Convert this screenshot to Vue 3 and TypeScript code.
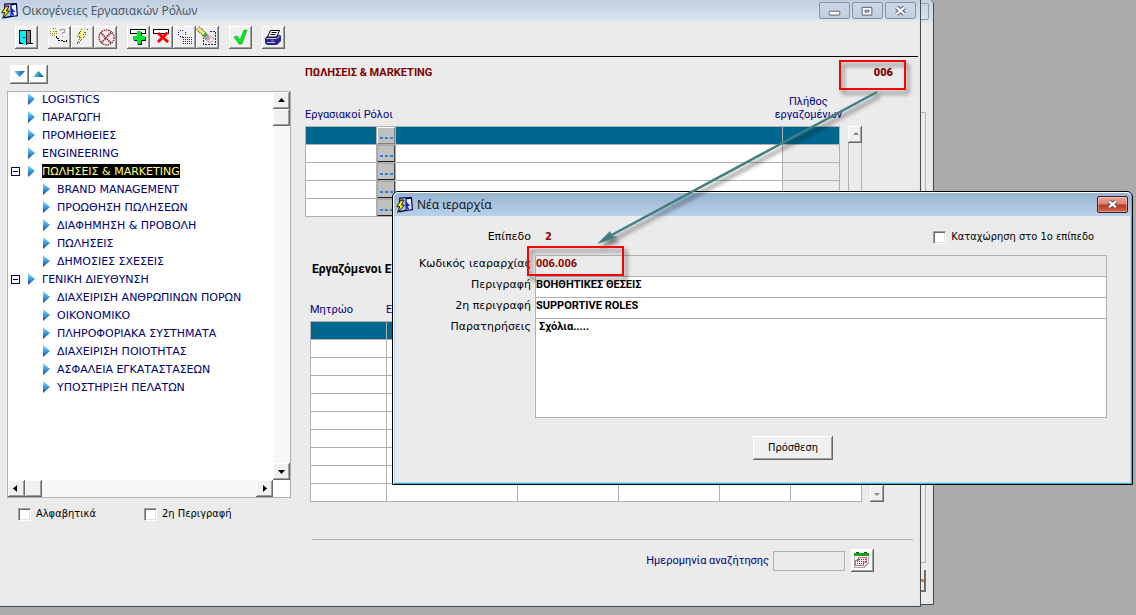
<script setup lang="ts">
import { ref } from 'vue'

interface TreeNode {
  label: string
  level: number
  open?: boolean
}

const nodes: TreeNode[] = [
  { label: 'LOGISTICS', level: 1 },
  { label: 'ΠΑΡΑΓΩΓΗ', level: 1 },
  { label: 'ΠΡΟΜΗΘΕΙΕΣ', level: 1 },
  { label: 'ENGINEERING', level: 1 },
  { label: 'ΠΩΛΗΣΕΙΣ & MARKETING', level: 1, open: true },
  { label: 'BRAND MANAGEMENT', level: 2 },
  { label: 'ΠΡΟΩΘΗΣΗ ΠΩΛΗΣΕΩΝ', level: 2 },
  { label: 'ΔΙΑΦΗΜΗΣΗ & ΠΡΟΒΟΛΗ', level: 2 },
  { label: 'ΠΩΛΗΣΕΙΣ', level: 2 },
  { label: 'ΔΗΜΟΣΙΕΣ ΣΧΕΣΕΙΣ', level: 2 },
  { label: 'ΓΕΝΙΚΗ ΔΙΕΥΘΥΝΣΗ', level: 1, open: true },
  { label: 'ΔΙΑΧΕΙΡΙΣΗ ΑΝΘΡΩΠΙΝΩΝ ΠΟΡΩΝ', level: 2 },
  { label: 'ΟΙΚΟΝΟΜΙΚΟ', level: 2 },
  { label: 'ΠΛΗΡΟΦΟΡΙΑΚΑ ΣΥΣΤΗΜΑΤΑ', level: 2 },
  { label: 'ΔΙΑΧΕΙΡΙΣΗ ΠΟΙΟΤΗΤΑΣ', level: 2 },
  { label: 'ΑΣΦΑΛΕΙΑ ΕΓΚΑΤΑΣΤΑΣΕΩΝ', level: 2 },
  { label: 'ΥΠΟΣΤΗΡΙΞΗ ΠΕΛΑΤΩΝ', level: 2 },
]

const selected = ref('ΠΩΛΗΣΕΙΣ & MARKETING')
const alphabetical = ref(false)
const secondDescription = ref(false)
const firstLevel = ref(false)
const code = ref('006.006')
const description = ref('ΒΟΗΘΗΤΙΚΕΣ ΘΕΣΕΙΣ')
const description2 = ref('SUPPORTIVE ROLES')
const notes = ref('Σχόλια.....')
const searchDate = ref('')
</script>

<template>
  <div class="desktop">
    <div class="window back-window">
      <div class="back-title"><span class="back-close"></span></div>
      <div class="back-body">
        <div class="back-panel"></div>
        <div class="back-button"><i></i></div>
      </div>
    </div>

    <main class="window main-window">
      <header class="titlebar">
        <svg class="app-icon" viewBox="0 0 16 16">
          <path d="M3 1.500L15 1l1 12.500-6 .5-7 1.500z" fill="#000040" />
          <path d="M4 2.500l5-.5v11l-5 1z" fill="#a8c4ff" />
          <path d="M10 3l4-.5.8 10-4.800.7z" fill="#eaf0ff" />
          <path d="M9 4.500l4.500 5H11l1.500 3-1.500.5-1.500-3z" fill="#1020f0" />
          <path d="M5 3h2v2H5z" fill="#e04070" />
          <path d="M4.500 4L.8 10h2.700L1.500 15.500 8 8.500H5L7.500 4z" fill="#fff000" stroke="#000" stroke-width=".8" />
        </svg>
        <h1>Οικογένειες Εργασιακών Ρόλων</h1>
        <div class="controls">
          <button type="button" aria-label="Ελαχιστοποίηση">
            <svg viewBox="0 0 30 16"><rect x="9.500" y="8.500" width="11" height="4" rx="1" fill="#fff" stroke="#565b68" /></svg>
          </button>
          <button type="button" aria-label="Μεγιστοποίηση">
            <svg viewBox="0 0 30 16"><path d="M9.500 4.500h10v8h-10z" fill="#fff" stroke="#565b68" /><path d="M12.500 7.500h4v2h-4z" fill="#cad8e6" stroke="#565b68" /></svg>
          </button>
          <button type="button" aria-label="Κλείσιμο">
            <svg viewBox="0 0 30 16"><path d="M11 4.500l8 7M19 4.500l-8 7" stroke="#565b68" stroke-width="4.500" /><path d="M11 4.500l8 7M19 4.500l-8 7" stroke="#fff" stroke-width="2.400" /></svg>
          </button>
        </div>
      </header>

      <div class="toolbar">
        <div class="group">
          <button type="button" class="tool" aria-label="Έξοδος">
            <svg viewBox="0 0 23 23" shape-rendering="crispEdges">
              <path d="M4 4h12v14H4z" fill="#000" /><path d="M12 5h3v12h-3z" fill="#808080" />
              <path d="M5 5h6v13l-2 1v-1l-4-2z" fill="#00f0f8" /><path d="M11.500 5v14" stroke="#000" /><path d="M8 11.500h2" stroke="#000" />
              <path d="M15 17.500h3" stroke="#000" />
            </svg>
          </button>
        </div>
        <div class="group">
          <button type="button" class="tool" aria-label="Αναζήτηση">
            <svg viewBox="0 0 23 23" shape-rendering="crispEdges">
              <path d="M3 3h5v6H3z" fill="#fbf8b8" />
              <path d="M4.500 2.500h3M2.500 4.500v4M4 9.500h4M8.500 4.500v4M5 5.500h3M4 7.500h3" fill="none" stroke="#8c8430" stroke-dasharray="1 1" />
              <path d="M8.500 10v2.500h2v2h4M15 15.500h3v-2" fill="none" stroke="#000" stroke-dasharray="2 1" />
              <path d="M12.500 5V3.500h4V6l-2 1v1M14 10.500h1" fill="none" stroke="#9c9cac" />
            </svg>
          </button>
          <button type="button" class="tool" aria-label="Εκτέλεση">
            <svg viewBox="0 0 23 23" shape-rendering="crispEdges">
              <path d="M10 3h5l-4 6h3L7 17l2-6H6z" fill="#f8f28c" />
              <path d="M10.500 3L6.500 10.500h3l-4 8M16.500 3L12.500 8.500h3L6 18.500" fill="none" stroke="#66602c" stroke-dasharray="1 1" />
            </svg>
          </button>
          <button type="button" class="tool" aria-label="Ακύρωση">
            <svg viewBox="0 0 23 23">
              <circle cx="12.500" cy="11.500" r="7.500" fill="none" stroke="#8b2530" stroke-width="1.300" stroke-dasharray="1.500 .8" />
              <path d="M7 7l10 10M17 6.500L7.500 16.500" fill="none" stroke="#8b2530" stroke-width="2" stroke-dasharray="1.300 .8" />
            </svg>
          </button>
        </div>
        <div class="group">
          <button type="button" class="tool" aria-label="Προσθήκη">
            <svg viewBox="0 0 23 23" shape-rendering="crispEdges">
              <path d="M3.500 3.500h15v4h-15z" fill="#fff" stroke="#000" />
              <path d="M10 6h5v5h4v4h-4v4h-4v-4H7v-4h3z" fill="#000060" />
              <path d="M10 5h4v5h4v4h-4v4h-4v-4H6v-4h4z" fill="#00e828" />
            </svg>
          </button>
          <button type="button" class="tool" aria-label="Διαγραφή">
            <svg viewBox="0 0 23 23">
              <path d="M3.500 3.500h15v4h-15z" fill="#fff" stroke="#000" shape-rendering="crispEdges" />
              <path d="M8 7l10 9M17.500 6.500L8 16" stroke="#f80000" stroke-width="3" />
            </svg>
          </button>
          <button type="button" class="tool" aria-label="Εύρεση">
            <svg viewBox="0 0 23 23" shape-rendering="crispEdges">
              <path d="M7 4.500h4M5.500 6v4M12.500 6v4M7 10.500h4" fill="none" stroke="#20208c" stroke-dasharray="1 1" />
              <path d="M9 11.500h2" stroke="#d02020" />
              <path d="M10.500 11v7M12.500 11v7M14.500 11v7M16.500 11v7M18.500 11v7" stroke="#20208c" stroke-dasharray="1 1" />
            </svg>
          </button>
          <button type="button" class="tool" aria-label="Καθαρισμός">
            <svg viewBox="0 0 23 23">
              <g shape-rendering="crispEdges" fill="none" stroke="#20208c"><path d="M7.500 18.500v-7M14 5.500h5.500v13H8" stroke-dasharray="2 1" /></g>
              <path d="M2 2l9 9" stroke="#333" stroke-width="5" stroke-dasharray="1 1" />
              <path d="M2 2l7 7" stroke="#f5ec50" stroke-width="3" />
              <path d="M8 8l3 3" stroke="#46a050" stroke-width="4" />
              <path d="M10.500 10.500l3 3" stroke="#dd8fb8" stroke-width="4" />
              <path d="M9 13l5 4 4-4-4-4" fill="none" stroke="#555" stroke-dasharray="1 1" />
            </svg>
          </button>
        </div>
        <div class="group">
          <button type="button" class="tool" aria-label="Αποδοχή">
            <svg viewBox="0 0 23 23">
              <path d="M5 11l3-1 3 4 4-10h3l-5 14h-3z" fill="#00f020" stroke="#00a018" stroke-width=".6" />
            </svg>
          </button>
        </div>
        <div class="group">
          <button type="button" class="tool" aria-label="Εκτύπωση">
            <svg viewBox="0 0 23 23">
              <path d="M3 12l4-3h11l1 1v5l-4 4H5l-2-2z" fill="#26268c" />
              <path d="M8.500 4.500h9l-3 6.500h-9z" fill="#fff" stroke="#000" />
              <path d="M9.500 6.500h5M8.500 8.500h5" stroke="#000" />
              <path d="M4.500 12.500h10l3-2M5 16.500h8" fill="none" stroke="#c8c8f4" /><path d="M9 14.500h3" stroke="#c040c0" stroke-width="1.500" />
            </svg>
          </button>
        </div>
      </div>

      <div class="content">
        <section class="left">
          <div class="tree-buttons">
            <button type="button" class="mini" aria-label="Ανάπτυξη"><svg viewBox="0 0 19 19"><path d="M4 6h11l-5.500 6z" fill="url(#blueGrad)" /></svg></button>
            <button type="button" class="mini" aria-label="Σύμπτυξη"><svg viewBox="0 0 19 19"><path d="M4 12h11L9.500 6z" fill="url(#blueGrad)" /></svg></button>
          </div>
          <div class="tree">
            <ul>
              <li v-for="node in nodes" :key="node.label" :class="{ child: node.level === 2 }">
                <button v-if="node.open" type="button" class="toggle" aria-label="Σύμπτυξη κλάδου"></button>
                <span v-else class="no-toggle"></span>
                <svg class="bullet" viewBox="0 0 7 12"><path d="M0 0l7 6-7 6z" fill="url(#bulletGrad)" /></svg>
                <button type="button" class="node" :class="{ selected: node.label === selected }" @click="selected = node.label">{{ node.label }}</button>
              </li>
            </ul>
            <div class="vbar">
              <button type="button" class="sb" aria-label="Επάνω"><svg viewBox="0 0 17 17"><path d="M5 10h7L8.500 6z" /></svg></button>
              <span class="thumb"></span>
              <span class="spacer"></span>
              <button type="button" class="sb" aria-label="Κάτω"><svg viewBox="0 0 17 17"><path d="M5 7h7l-3.500 4z" /></svg></button>
            </div>
            <div class="hbar">
              <button type="button" class="sb" aria-label="Αριστερά"><svg viewBox="0 0 17 17"><path d="M9 5v7L5 8.500z" /></svg></button>
              <span class="thumb"></span>
              <span class="spacer"></span>
              <button type="button" class="sb" aria-label="Δεξιά"><svg viewBox="0 0 17 17"><path d="M7 5v7l4-3.500z" /></svg></button>
            </div>
          </div>
          <div class="options">
            <label><input v-model="alphabetical" type="checkbox" />Αλφαβητικά</label>
            <label><input v-model="secondDescription" type="checkbox" />2η Περιγραφή</label>
          </div>
        </section>

        <section class="right">
          <div class="record">
            <h2>ΠΩΛΗΣΕΙΣ &amp; MARKETING</h2>
            <strong>006</strong>
          </div>
          <div class="roles-head">
            <span>Εργασιακοί Ρόλοι</span>
            <span class="count">Πλήθος<br />εργαζομένων</span>
          </div>
          <div class="grid-row roles">
            <table aria-label="Εργασιακοί Ρόλοι">
              <colgroup><col class="r1" /><col class="r2" /><col /><col class="r4" /></colgroup>
              <tbody>
                <tr v-for="n in 5" :key="n" :class="{ active: n === 1 }">
                  <td></td>
                  <td class="pick"><button type="button" :class="{ raised: n === 1 }" aria-label="Επιλογή ρόλου"><i></i><i></i><i></i></button></td>
                  <td></td>
                  <td class="locked"></td>
                </tr>
              </tbody>
            </table>
            <div class="side-bar">
              <button type="button" class="sb" aria-label="Επάνω"><svg viewBox="0 0 17 17"><path d="M5 9h6L8 6z" fill="#888" /></svg></button>
              <span class="spacer"></span>
            </div>
          </div>
          <h3>Εργαζόμενοι Ε</h3>
          <div class="staff-head"><span>Μητρώο</span><span>Ε</span></div>
          <div class="grid-row staff">
            <table aria-label="Εργαζόμενοι">
              <colgroup><col class="s1" /><col /><col class="s3" /><col class="s3" /><col class="s5" /><col class="s5" /></colgroup>
              <tbody>
                <tr v-for="n in 10" :key="n" :class="{ active: n === 1 }"><td v-for="c in 6" :key="c"></td></tr>
              </tbody>
            </table>
            <div class="side-bar">
              <span class="spacer"></span>
              <button type="button" class="sb" aria-label="Κάτω"><svg viewBox="0 0 17 17"><path d="M4 8h6l-3 3z" fill="#888" /></svg></button>
            </div>
          </div>
          <hr />
          <div class="search">
            <label for="date">Ημερομηνία αναζήτησης</label>
            <input id="date" v-model="searchDate" type="text" />
            <button type="button" class="tool calendar" aria-label="Ημερολόγιο">
              <svg viewBox="0 0 23 23" shape-rendering="crispEdges">
                <path d="M3.500 5h14v9l-4 4h-10z" fill="#fff" stroke="#a8a8a8" />
                <path d="M3 4h15v3H3z" fill="#18a018" /><path d="M5 3.500h3M13 3.500h3" stroke="#224422" />
                <path d="M7.500 8.500h8v5h-3v3h-8v-5h3z" fill="none" stroke="#d86068" />
                <path d="M6 10.500h9M6 12.500h9M6 14.500h7" stroke="#444" stroke-dasharray="1 1" />
              </svg>
            </button>
          </div>
        </section>
      </div>
    </main>

    <section class="dialog" role="dialog" aria-labelledby="dialog-title">
      <header class="dialog-title">
        <svg class="app-icon" viewBox="0 0 16 16">
          <path d="M3 1.500L15 1l1 12.500-6 .5-7 1.500z" fill="#000040" />
          <path d="M4 2.500l5-.5v11l-5 1z" fill="#a8c4ff" />
          <path d="M10 3l4-.5.8 10-4.800.7z" fill="#eaf0ff" />
          <path d="M9 4.500l4.500 5H11l1.500 3-1.500.5-1.500-3z" fill="#1020f0" />
          <path d="M5 3h2v2H5z" fill="#e04070" />
          <path d="M4.500 4L.8 10h2.700L1.500 15.500 8 8.500H5L7.500 4z" fill="#fff000" stroke="#000" stroke-width=".8" />
        </svg>
        <h2 id="dialog-title">Νέα ιεραρχία</h2>
        <button type="button" class="close" aria-label="Κλείσιμο">
          <svg viewBox="0 0 30 16"><path d="M11.500 4.500l7 6M18.500 4.500l-7 6" stroke="#59454b" stroke-width="4.500" /><path d="M11.500 4.500l7 6M18.500 4.500l-7 6" stroke="#fff" stroke-width="2.400" /></svg>
        </button>
      </header>
      <form class="form" @submit.prevent>
        <div class="level-row">
          <span class="caption">Επίπεδο</span>
          <strong>2</strong>
          <label class="first"><input v-model="firstLevel" type="checkbox" />Καταχώρηση στο 1ο επίπεδο</label>
        </div>
        <div class="field"><label for="code">Κωδικός ιεαραρχίας</label><input id="code" v-model="code" class="code" type="text" readonly /></div>
        <div class="field"><label for="desc">Περιγραφή</label><input id="desc" v-model="description" type="text" /></div>
        <div class="field"><label for="desc2">2η περιγραφή</label><input id="desc2" v-model="description2" type="text" /></div>
        <div class="field"><label for="notes">Παρατηρήσεις</label><textarea id="notes" v-model="notes"></textarea></div>
        <button type="submit" class="submit">Πρόσθεση</button>
      </form>
    </section>

    <svg class="callouts" width="1136" height="615" viewBox="0 0 1136 615" aria-hidden="true">
      <defs>
        <linearGradient id="blueGrad" x1="0" y1="0" x2="1" y2="0"><stop offset="0" stop-color="#7fd0f4" /><stop offset=".5" stop-color="#2e94d0" /><stop offset="1" stop-color="#1d4f92" /></linearGradient>
        <linearGradient id="bulletGrad" x1="0" y1="0" x2="0" y2="1"><stop offset="0" stop-color="#8fe4f8" /><stop offset=".5" stop-color="#3c9ee0" /><stop offset="1" stop-color="#1c3f80" /></linearGradient>
        <filter id="shade" x="-20%" y="-20%" width="150%" height="150%"><feDropShadow dx="3" dy="4" stdDeviation="2" flood-color="#000" flood-opacity=".55" /></filter>
      </defs>
      <g filter="url(#shade)">
        <path d="M840 61h65v28h-65z" fill="none" stroke="#f00" stroke-width="2" />
        <path d="M528 247h95v28h-95z" fill="none" stroke="#f00" stroke-width="2" />
        <path d="M877 92L608 237" stroke="#437f7f" stroke-width="2.500" />
        <path d="M597 244l13-13 2 5 6 1z" fill="#437f7f" />
      </g>
    </svg>
  </div>
</template>

<style>
body {
  margin: 0;
}
</style>

<style scoped>
.desktop {
  position: relative;
  min-height: 100vh;
  overflow: hidden;
  background: #ababab;
  color: #000;
  font: 11px/14px 'DejaVu Sans Condensed', 'Noto Sans', sans-serif;
}
.desktop * {
  box-sizing: border-box;
}
button,
input,
textarea {
  margin: 0;
  padding: 0;
  border: 0;
  border-radius: 0;
  font: inherit;
  color: inherit;
}
button svg {
  display: block;
}
h1,
h2,
h3 {
  margin: 0;
}
.window {
  border: solid #4a4a4a;
  border-width: 0 1px 1px 0;
  background: #ebebeb;
  box-shadow: inset -2px -2px #dce8f4;
}

/* window behind */
.back-window {
  position: absolute;
  inset: 0 202px 10px 0;
  display: flex;
  flex-direction: column;
  border-top-right-radius: 5px;
}
.back-title {
  display: flex;
  justify-content: flex-end;
  height: 23px;
  padding: 3px 4px;
  background: linear-gradient(#c3d1df, #dae6f2);
  border-top-right-radius: 5px;
}
.back-close {
  width: 30px;
  border: 1px solid #8d9bab;
  border-radius: 2px;
}
.back-body {
  flex: 1;
  display: flex;
  flex-direction: column;
  padding: 89px 7px 12px 0;
}
.back-panel {
  flex: 1;
  border: 1px solid #b4b4b4;
}
.back-button {
  display: flex;
  align-items: center;
  justify-content: flex-end;
  align-self: flex-end;
  width: 23px;
  height: 22px;
  margin-top: 7px;
  border: solid #707070;
  border-width: 0 2px 2px 0;
}
.back-button i {
  width: 3px;
  height: 3px;
  background: #d88030;
}

/* main window */
.main-window {
  position: relative;
  margin-right: 215px;
}
.titlebar {
  display: flex;
  align-items: center;
  height: 21px;
  padding: 0 4px 0 1px;
  background: linear-gradient(#c0cfde, #dae6f2);
}
.app-icon {
  width: 17px;
  height: 17px;
}
.titlebar h1,
.dialog-title h2 {
  flex: 1;
  margin-left: 4px;
  font: 12px/16px 'Noto Sans', sans-serif;
}
.titlebar h1 {
  color: #4c5866;
}
.controls {
  display: flex;
  gap: 2px;
}
.controls button {
  width: 31px;
  height: 17px;
  border: 1px solid #8493a5;
  border-radius: 2px;
  background: linear-gradient(#cbd8e6, #c1cfde);
}
.toolbar {
  display: flex;
  gap: 10px;
  margin-right: 2px;
  padding: 5px 15px 7px;
  border-bottom: 1px solid #000;
}
.group {
  display: flex;
}
.tool,
.mini,
.sb,
.thumb,
.submit {
  background: #f0f0f0;
  box-shadow: inset -1px -1px #696969, inset 1px 1px #fff, inset -2px -2px #a0a0a0;
}
.tool,
.tool svg {
  width: 23px;
  height: 23px;
}
.content {
  display: flex;
  margin-right: 2px;
}
.left {
  flex: none;
  width: 305px;
  padding-left: 7px;
}
.tree-buttons {
  display: flex;
  padding: 8px 0 7px 3px;
}
.mini,
.mini svg {
  width: 19px;
  height: 19px;
}
.mini {
  background: #fff;
}
.tree {
  display: grid;
  grid-template: 388px 17px / 1fr 17px;
  width: 284px;
  border: 1px solid #b0b0b0;
  background: #fff;
}
.tree ul {
  overflow: hidden;
  margin: 0;
  padding: 0;
  list-style: none;
}
.tree li {
  display: flex;
  align-items: center;
  height: 18px;
  padding-left: 3px;
}
.tree li:first-child {
  margin-top: -2px;
}
.tree li.child {
  padding-left: 18px;
}
.toggle,
.no-toggle {
  width: 9px;
  height: 9px;
  margin-right: 8px;
}
.toggle {
  border: 1px solid #000060;
  background: linear-gradient(#000060, #000060) center / 5px 1px no-repeat #fff;
}
.bullet {
  width: 7px;
  height: 12px;
}
.node {
  height: 14px;
  padding-top: 1px;
  margin-left: 7px;
  background: none;
  color: #000070;
  font: 11px/13px 'DejaVu Sans', sans-serif;
  white-space: nowrap;
}
.node.selected {
  background: #000;
  color: #ffff80;
}
.vbar,
.hbar {
  display: flex;
  background: repeating-conic-gradient(#fff 0 25%, #f0f0f0 0 50%) 0 0 / 2px 2px;
}
.vbar,
.side-bar {
  flex-direction: column;
}
.sb,
.sb svg,
.thumb {
  display: block;
  width: 17px;
  height: 17px;
}
.spacer {
  flex: 1;
}
.options {
  display: flex;
  padding: 9px 0 0 11px;
}
.options label,
.first {
  display: flex;
  align-items: center;
}
.options label {
  width: 126px;
}
input[type='checkbox'] {
  width: 13px;
  height: 13px;
  margin-right: 5px;
  appearance: none;
  background: #fff;
  border: 1px solid;
  border-color: #a0a0a0 #fff #fff #a0a0a0;
  box-shadow: inset 1px 1px #696969, inset -1px -1px #e3e3e3;
}
input[type='checkbox']:checked {
  background: radial-gradient(#000 40%, #fff 45%);
}

/* record pane */
.right {
  flex: 1;
  min-width: 0;
  padding-bottom: 34px;
}
.record {
  display: flex;
  justify-content: space-between;
  padding: 9px 25px 9px 0;
  color: #800000;
  font: bold 11px/14px Roboto, sans-serif;
}
.record h2 {
  font: inherit;
}
.roles-head,
.staff-head,
.search {
  color: #000080;
  font: 11px/14px Roboto, sans-serif;
}
.roles-head {
  display: flex;
  align-items: flex-end;
  justify-content: space-between;
  padding: 6px 76px 5px 0;
  line-height: 13px;
}
.count {
  text-align: center;
}
.grid-row {
  display: flex;
  gap: 8px;
}
.roles {
  margin-right: 56px;
}
table {
  flex: 1;
  table-layout: fixed;
  border-collapse: collapse;
  background: #fff;
}
td {
  height: 18px;
  padding: 0;
  border: 1px solid #b0b0b0;
}
.r1 { width: 71px; }
.r2 { width: 19px; }
.r4 { width: 57px; }
.s1 { width: 76px; }
.s3 { width: 101px; }
.s5 { width: 71px; }
.locked {
  background: #ebebeb;
}
.active td {
  background: #00688f;
}
.pick button {
  display: flex;
  align-items: flex-end;
  justify-content: center;
  gap: 2px;
  width: 100%;
  height: 17px;
  padding-bottom: 4px;
  background: #c0c0c0;
  border: 1px solid;
  border-color: #a8a8a8 #404040 #202020 #a8a8a8;
}
.pick button.raised {
  border-color: #fff #808080 #808080 #fff;
}
.pick i {
  width: 3px;
  height: 2px;
  background: #3080e0;
}
.side-bar {
  display: flex;
  width: 14px;
  border: solid #b0b0b0;
  border-width: 0 1px;
}
.side-bar .sb {
  width: 14px;
  margin-left: -1px;
}
.right h3 {
  padding: 45px 0 0 7px;
  font: bold 12px/14px Roboto, sans-serif;
}
.staff-head {
  display: flex;
  padding: 27px 0 4px 5px;
}
.staff-head span {
  width: 76px;
}
.staff {
  margin: 0 34px 0 5px;
}
hr {
  height: 1px;
  margin: 37px 5px 9px 7px;
  border: 0;
  background: #b0b0b0;
}
.search {
  display: flex;
  align-items: center;
  justify-content: flex-end;
  padding-right: 44px;
}
.search input {
  width: 72px;
  height: 20px;
  margin: 0 6px 0 4px;
  border: 1px solid #b0b0b0;
  background: #ebebeb;
}
.tool.calendar {
  background: #fafafa;
}

/* dialog */
.dialog {
  position: absolute;
  top: 191px;
  right: 3px;
  left: 392px;
  border: 1px solid #000;
  border-radius: 6px 6px 0 0;
  background: #ebebeb;
  box-shadow: inset 1px 1px #fff, inset -1px -1px #40b8dc, inset 2px 0 #b9d1ea, inset -2px -2px #b9d1ea;
}
.dialog-title {
  display: flex;
  align-items: center;
  height: 24px;
  margin: 0 1px;
  padding: 0 3px 0 2px;
  border-top: 1px solid #fff;
  border-radius: 5px 5px 0 0;
  background: linear-gradient(#98b4d0, #b9d1ea);
}
.dialog-title h2 {
  color: #101820;
}
.close {
  width: 31px;
  height: 17px;
  border: 1px solid #4a1820;
  border-radius: 2px;
  background: linear-gradient(#e8a898, #d88070 48%, #b8341c 52%, #d06850);
  box-shadow: inset 0 0 0 1px rgba(255, 255, 255, 0.35);
}
.form {
  display: flex;
  flex-direction: column;
  padding: 12px 25px 24px 2px;
}
.level-row {
  display: flex;
  align-items: center;
  height: 18px;
  margin-bottom: 9px;
}
.caption,
.field label {
  width: 136px;
  text-align: right;
  font: 11px/14px 'DejaVu Sans', sans-serif;
}
.level-row strong {
  flex: 1;
  margin-left: 14px;
  color: #900000;
}
.first {
  padding-right: 13px;
}
.field {
  display: flex;
  align-items: flex-start;
}
.field + .field {
  margin-top: -1px;
}
.field label {
  padding-top: 2px;
}
.field input,
.field textarea {
  flex: 1;
  min-width: 0;
  height: 22px;
  margin-left: 4px;
  padding: 0 0 5px;
  border: 1px solid #b0b0b0;
  background: #fff;
  font: bold 11px/14px Roboto, sans-serif;
}
.field input.code {
  background: #ebebeb;
  color: #900000;
}
.field textarea {
  height: 100px;
  padding: 1px 3px;
  resize: none;
}
.submit {
  align-self: center;
  width: 80px;
  height: 24px;
  margin: 18px 0 0 84px;
}
.callouts {
  position: absolute;
  top: 0;
  left: 0;
  pointer-events: none;
}
</style>
